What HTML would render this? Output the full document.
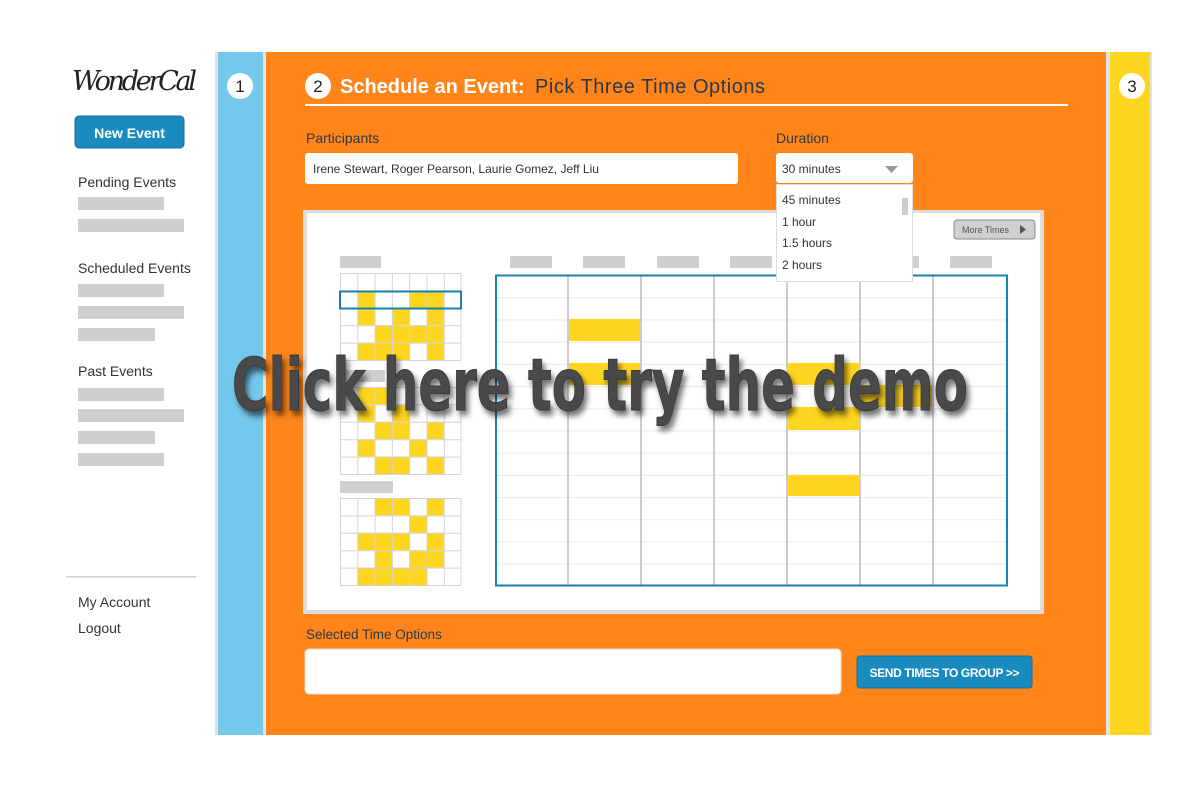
<!DOCTYPE html>
<html><head><meta charset="utf-8"><style>html,body{margin:0;padding:0;background:#fff}svg{display:block}</style></head>
<body>
<svg width="1200" height="785" viewBox="0 0 1200 785" xmlns="http://www.w3.org/2000/svg" font-family="'Liberation Sans', 'DejaVu Sans', sans-serif">
<defs>
<pattern id="rows" x="0" y="275" width="10" height="22.2" patternUnits="userSpaceOnUse">
<line x1="0" y1="0.5" x2="10" y2="0.5" stroke="#ececec" stroke-width="1.2"/></pattern>
<filter id="sh" x="-5%" y="-20%" width="110%" height="150%"><feDropShadow dx="3" dy="5" stdDeviation="3" flood-color="#000" flood-opacity="0.55"/></filter>
</defs>
<rect width="1200" height="785" fill="#fff"/>
<!-- sidebar -->
<text x="72" y="90" font-family="'DejaVu Serif', serif" font-style="italic" font-size="27" fill="#222" textLength="125">WonderCal</text>
<rect x="75" y="116" width="109" height="32" rx="4" fill="#1a8bbf" stroke="#146f99"/>
<text x="129.5" y="138" text-anchor="middle" font-weight="bold" font-size="14" fill="#fff">New Event</text>
<g font-size="14" fill="#333">
<text x="78" y="187">Pending Events</text>
<text x="78" y="273">Scheduled Events</text>
<text x="78" y="376">Past Events</text>
<text x="78" y="607">My Account</text>
<text x="78" y="633">Logout</text>
</g>
<g fill="#cfcfcf">
<rect x="78" y="197" width="86" height="13"/><rect x="78" y="219" width="106" height="13"/>
<rect x="78" y="284" width="86" height="13"/><rect x="78" y="306" width="106" height="13"/><rect x="78" y="328" width="77" height="13"/>
<rect x="78" y="388" width="86" height="13"/><rect x="78" y="409" width="106" height="13"/><rect x="78" y="431" width="77" height="13"/><rect x="78" y="453" width="86" height="13"/>
</g>
<rect x="66" y="576" width="130" height="1.5" fill="#ccc"/>
<!-- panels -->
<rect x="215" y="52" width="937" height="683" fill="#e2e2e2"/>
<rect x="218" y="52" width="45" height="683" fill="#74c8eb"/>
<rect x="266" y="52" width="840" height="683" fill="#ff851b"/>
<rect x="1110" y="52" width="40" height="683" fill="#fed51f"/>
<circle cx="240" cy="86" r="13" fill="#fff"/><text x="240" y="92" text-anchor="middle" font-size="17" fill="#222">1</text>
<circle cx="1132" cy="86" r="13" fill="#fff"/><text x="1132" y="92" text-anchor="middle" font-size="17" fill="#222">3</text>
<circle cx="318" cy="86" r="13" fill="#fff"/><text x="318" y="92" text-anchor="middle" font-size="17" fill="#222">2</text>
<text x="340" y="93" font-size="20" font-weight="bold" fill="#fff">Schedule an Event:</text>
<text x="535" y="93" font-size="20" fill="#2b3947" textLength="230">Pick Three Time Options</text>
<rect x="305" y="104" width="763" height="2" fill="#fff"/>
<text x="306" y="143" font-size="14" fill="#2b3947">Participants</text>
<text x="776" y="143" font-size="14" fill="#2b3947">Duration</text>
<rect x="305" y="153" width="433" height="31" rx="3" fill="#fff"/>
<text x="313" y="173" font-size="12" fill="#333">Irene Stewart, Roger Pearson, Laurie Gomez, Jeff Liu</text>
<!-- calendar box -->
<rect x="303" y="210" width="741" height="404" fill="#dcdcdc"/>
<rect x="307" y="213" width="733" height="397" fill="#fff"/>
<rect x="340" y="256" width="41" height="12" fill="#cfcfcf"/>
<rect x="340" y="481" width="53" height="12" fill="#cfcfcf"/>
<rect x="340" y="370" width="45" height="12" fill="#cfcfcf"/>
<g fill="#fed51f">
<rect x="357.3" y="290.4" width="17.3" height="17.4"/><rect x="409.2" y="290.4" width="34.6" height="17.4"/>
<rect x="357.3" y="307.8" width="17.3" height="17.4"/><rect x="391.9" y="307.8" width="17.3" height="17.4"/><rect x="426.5" y="307.8" width="17.3" height="17.4"/>
<rect x="374.6" y="325.2" width="69.2" height="17.4"/>
<rect x="357.3" y="342.6" width="51.9" height="17.4"/><rect x="426.5" y="342.6" width="17.3" height="17.4"/>
<rect x="357.3" y="387" width="34.6" height="17.4"/>
<rect x="357.3" y="404.4" width="17.3" height="17.4"/><rect x="391.9" y="404.4" width="17.3" height="17.4"/>
<rect x="374.6" y="421.8" width="34.6" height="17.4"/><rect x="426.5" y="421.8" width="17.3" height="17.4"/>
<rect x="357.3" y="439.2" width="17.3" height="17.4"/><rect x="409.2" y="439.2" width="17.3" height="17.4"/>
<rect x="374.6" y="456.6" width="34.6" height="17.4"/><rect x="426.5" y="456.6" width="17.3" height="17.4"/>
<rect x="374.6" y="498" width="34.6" height="17.4"/><rect x="426.5" y="498" width="17.3" height="17.4"/>
<rect x="409.2" y="515.4" width="17.3" height="17.4"/>
<rect x="357.3" y="532.8" width="51.9" height="17.4"/><rect x="426.5" y="532.8" width="17.3" height="17.4"/>
<rect x="374.6" y="550.2" width="17.3" height="17.4"/><rect x="409.2" y="550.2" width="34.6" height="17.4"/>
<rect x="357.3" y="567.6" width="69.2" height="17.4"/>
</g>
<g stroke="#d4d4d4" stroke-width="1" fill="none">
<path d="M340 273.5H461M340 290.9H461M340 308.3H461M340 325.7H461M340 343.1H461M340 360.5H461 M340.5 273V360M357.8 273V360M375.1 273V360M392.4 273V360M409.7 273V360M427 273V360M444.3 273V360M461 273V360"/>
<path d="M340 387.5H461M340 404.9H461M340 422.3H461M340 439.7H461M340 457.1H461M340 474.5H461 M340.5 387V474M357.8 387V474M375.1 387V474M392.4 387V474M409.7 387V474M427 387V474M444.3 387V474M461 387V474"/>
<path d="M340 498.5H461M340 515.9H461M340 533.3H461M340 550.7H461M340 568.1H461M340 585.5H461 M340.5 498V585M357.8 498V585M375.1 498V585M392.4 498V585M409.7 498V585M427 498V585M444.3 498V585M461 498V585"/>
</g>
<rect x="340" y="291.5" width="121" height="17" fill="none" stroke="#1b7fb0" stroke-width="2"/>
<!-- big grid -->
<g fill="#cfcfcf">
<rect x="510" y="256" width="42" height="12"/><rect x="583" y="256" width="42" height="12"/><rect x="657" y="256" width="42" height="12"/><rect x="730" y="256" width="42" height="12"/><rect x="877" y="256" width="42" height="12"/><rect x="950" y="256" width="42" height="12"/>
</g>
<rect x="496" y="275" width="511" height="311" fill="url(#rows)"/>
<g fill="#fed51f">
<rect x="569" y="319" width="72" height="22"/><rect x="569" y="363" width="72" height="22"/>
<rect x="788" y="363" width="72" height="22"/><rect x="788" y="407" width="72" height="23"/><rect x="788" y="475" width="72" height="21"/>
<rect x="861" y="385" width="72" height="22"/>
</g>
<path d="M568 275V586M641 275V586M714 275V586M787 275V586M860 275V586M933 275V586" stroke="#cccccc" stroke-width="2"/>
<rect x="496" y="275.5" width="511" height="310" fill="none" stroke="#1b7fb0" stroke-width="2"/>
<!-- more times -->
<rect x="954" y="220" width="81" height="19" rx="3" fill="#d0d0d0" stroke="#888"/>
<text x="962" y="233" font-size="9" fill="#555">More Times</text>
<path d="M1020 225l6 4.5-6 4.5z" fill="#555"/>
<!-- dropdown -->
<rect x="776" y="153" width="137" height="30" rx="3" fill="#fff"/>
<text x="782" y="173" font-size="12" fill="#333">30 minutes</text>
<path d="M885 166h13l-6.5 7z" fill="#999"/>
<rect x="776.5" y="184.5" width="136" height="97" fill="#fff" stroke="#ddd"/>
<rect x="902" y="198" width="6" height="17" fill="#ccc"/>
<g font-size="12" fill="#333">
<text x="782" y="204">45 minutes</text><text x="782" y="226">1 hour</text><text x="782" y="247">1.5 hours</text><text x="782" y="269">2 hours</text>
</g>
<!-- bottom -->
<text x="306" y="639" font-size="13.5" fill="#2b3947">Selected Time Options</text>
<rect x="305" y="649" width="536" height="45" rx="4" fill="#fff" stroke="#ddd"/>
<rect x="857" y="656" width="175" height="32" rx="3" fill="#1a8bbf" stroke="#146f99"/>
<text x="944.5" y="677" text-anchor="middle" font-size="12" font-weight="bold" fill="#fff" textLength="150">SEND TIMES TO GROUP &gt;&gt;</text>
<!-- overlay -->
<text x="232" y="410" font-size="72" font-weight="bold" font-family="'DejaVu Sans', sans-serif" fill="#4a4a4a" stroke="#3a3a3a" stroke-width="1" filter="url(#sh)" textLength="736" lengthAdjust="spacingAndGlyphs">Click here to try the demo</text>
</svg>
</body></html>
